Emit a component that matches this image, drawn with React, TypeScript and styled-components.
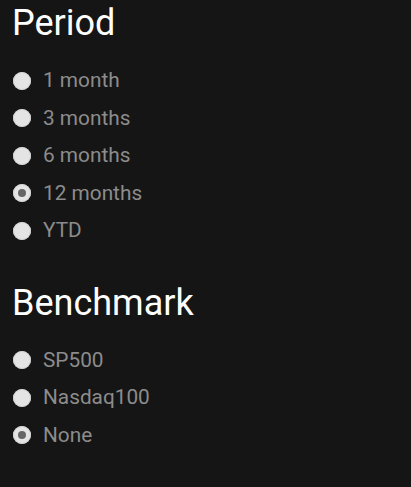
import React, { useState } from "react";
import styled, { createGlobalStyle } from "styled-components";

const Global = createGlobalStyle`
  html, body {
    margin: 0;
    padding: 0;
    background: #151515;
  }
  body {
    font-family: Roboto, "Noto Sans", "Liberation Sans", sans-serif;
  }
`;

const Page = styled.div`
  padding: 3px 0 0 0;
  min-height: 487px;
  box-sizing: border-box;
  background: #151515;
`;

const Section = styled.section<{ $gapTop?: number }>`
  margin-top: ${(p) => p.$gapTop ?? 0}px;
`;

const Heading = styled.h2`
  margin: 0 0 19px 12px;
  font-size: 36px;
  line-height: 40px;
  font-weight: 400;
  color: #ffffff;
`;

const Options = styled.div`
  display: flex;
  flex-direction: column;
  padding-left: 13px;
`;

const Row = styled.label`
  display: flex;
  align-items: center;
  gap: 11px;
  height: 37.5px;
  cursor: pointer;
`;

const Radio = styled.span<{ $checked: boolean }>`
  position: relative;
  width: 18px;
  height: 18px;
  border-radius: 50%;
  background: #e4e4e4;
  box-shadow: inset 0 0 0 1px #cfcfcf;
  flex: none;
  &::after {
    content: "";
    display: ${(p) => (p.$checked ? "block" : "none")};
    position: absolute;
    left: 5px;
    top: 5px;
    width: 8px;
    height: 8px;
    border-radius: 50%;
    background: #666666;
  }
`;

const Label = styled.span`
  font-size: 20.8px;
  line-height: 37.5px;
  color: #8c8c8c;
  padding-left: 1px;
`;

const Group: React.FC<{ title: string; options: string[]; initial: string; gapTop?: number }> = ({
  title,
  options,
  initial,
  gapTop,
}) => {
  const [value, setValue] = useState(initial);
  return (
    <Section $gapTop={gapTop}>
      <Heading>{title}</Heading>
      <Options>
        {options.map((o) => (
          <Row key={o} onClick={() => setValue(o)}>
            <Radio $checked={value === o} />
            <Label>{o}</Label>
          </Row>
        ))}
      </Options>
    </Section>
  );
};

export default function App() {
  return (
    <>
      <Global />
      <Page>
        <Group
          title="Period"
          options={["1 month", "3 months", "6 months", "12 months", "YTD"]}
          initial="12 months"
        />
        <Group
          title="Benchmark"
          options={["SP500", "Nasdaq100", "None"]}
          initial="None"
          gapTop={33}
        />
      </Page>
    </>
  );
}
